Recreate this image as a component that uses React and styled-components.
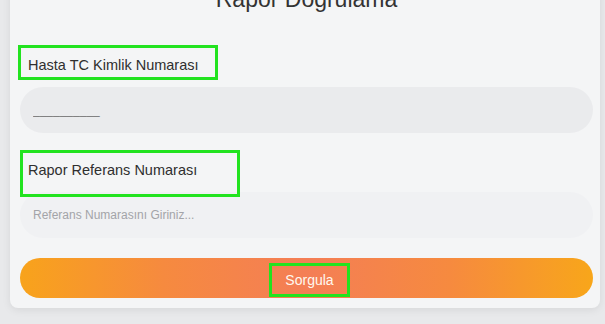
import styled, { createGlobalStyle } from "styled-components";

const GlobalStyle = createGlobalStyle`
  html, body {
    margin: 0;
    padding: 0;
    background: #e8e9eb;
    font-family: "Liberation Sans", Arial, sans-serif;
    overflow: hidden;
  }
`;

const Page = styled.div`
  width: 605px;
  height: 324px;
  padding: 0 5px 0 10px;
  box-sizing: border-box;
  overflow: hidden;
`;

const Card = styled.div`
  margin-top: -40px;
  padding: 26px 7px 10px 10px;
  background: #f4f5f6;
  border-radius: 8px;
  box-shadow: 0 2px 8px rgba(0, 0, 0, 0.08);
`;

const Title = styled.h2`
  margin: 0;
  text-align: center;
  font-size: 23px;
  font-weight: normal;
  line-height: 26px;
  color: #333;
`;

const Form = styled.form`
  display: flex;
  flex-direction: column;
  padding-top: 45px;
`;

const Label = styled.label`
  position: relative;
  display: block;
  padding-left: 8px;
  margin-top: ${(p) => p.$gap || 0}px;
  font-size: 14.5px;
  line-height: 17px;
  color: #2f2f2f;
`;

// annotation frame drawn over the label
const Frame = styled.span`
  position: absolute;
  left: ${(p) => p.$left}px;
  top: -12px;
  width: ${(p) => p.$w}px;
  height: ${(p) => p.$h}px;
  border: 3px solid #22e31f;
  box-sizing: border-box;
  pointer-events: none;
`;

const Input = styled.input`
  margin-top: 13px;
  height: 46px;
  border: none;
  border-radius: 23px;
  padding: 0 13px;
  background: ${(p) => (p.$faint ? "#f0f1f3" : "#eaebed")};
  font-family: inherit;
  font-size: 12px;
  color: #555;
  outline: none;
  &::placeholder {
    color: ${(p) => (p.$faint ? "#a3a4a8" : "#777")};
  }
`;

const Button = styled.button`
  margin-top: 20px;
  height: 40px;
  border: none;
  border-radius: 20px;
  background: linear-gradient(90deg, #f8a31b 0%, #f68a3f 25%, #f47e56 50%, #f68a3f 75%, #f8a61a 100%);
  display: flex;
  align-items: center;
  justify-content: center;
  cursor: pointer;
  padding: 0;
`;

const ButtonText = styled.span`
  display: flex;
  align-items: center;
  justify-content: center;
  width: 81px;
  height: 34px;
  margin: 4px 0 0 6px;
  border: 3px solid #22e31f;
  box-sizing: border-box;
  color: #fff8ef;
  font-family: "Liberation Sans", Arial, sans-serif;
  font-size: 14px;
`;

export default function App() {
  return (
    <Page>
      <GlobalStyle />
      <Card>
        <Title>Rapor Doğrulama</Title>
        <Form onSubmit={(e) => e.preventDefault()}>
          <Label>
            <Frame $left={-2} $w={200} $h={35} />
            Hasta TC Kimlik Numarası
          </Label>
          <Input placeholder="__________" />
          <Label $gap={29}>
            <Frame $left={0} $w={220} $h={47} />
            Rapor Referans Numarası
          </Label>
          <Input $faint placeholder="Referans Numarasını Giriniz..." />
          <Button type="submit">
            <ButtonText>Sorgula</ButtonText>
          </Button>
        </Form>
      </Card>
    </Page>
  );
}
